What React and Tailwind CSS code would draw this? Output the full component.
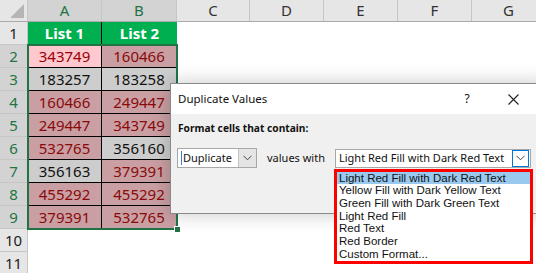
import React from 'react'

const cols = ['A', 'B', 'C', 'D', 'E', 'F', 'G']
const colW = ['w-[74px]', 'w-[75px]', 'w-[73px]', 'w-[74px]', 'w-[74px]', 'w-[74px]', 'w-[74px]']

// p = pink (duplicate), g = grey (unique), a = active cell
const data = [
  [['343749', 'a'], ['160466', 'p']],
  [['183257', 'g'], ['183258', 'g']],
  [['160466', 'p'], ['249447', 'p']],
  [['249447', 'p'], ['343749', 'p']],
  [['532765', 'p'], ['356160', 'g']],
  [['356163', 'g'], ['379391', 'p']],
  [['455292', 'p'], ['455292', 'p']],
  [['379391', 'p'], ['532765', 'p']],
]

const cellTone = {
  a: 'bg-[#ffc7ce] text-[#9c0006]',
  p: 'bg-[#c99fa3] text-[#8a0a0a]',
  g: 'bg-[#cdcdcd] text-[#111]',
}

const options = [
  'Light Red Fill with Dark Red Text',
  'Yellow Fill with Dark Yellow Text',
  'Green Fill with Dark Green Text',
  'Light Red Fill',
  'Red Text',
  'Red Border',
  'Custom Format...',
]

function Chevron() {
  return (
    <svg width="9" height="6" viewBox="0 0 9 6">
      <path d="M0.5 0.8 L4.5 4.8 L8.5 0.8" fill="none" stroke="#444" strokeWidth="1" />
    </svg>
  )
}

function RowHead({ n, selected }) {
  return (
    <div
      className={`w-[28px] h-[23px] shrink-0 flex items-center justify-center border-b border-r border-[#c6c6c6] text-[15px] ${
        selected ? 'bg-[#d3d3d3] text-[#217346]' : 'bg-[#e6e6e6] text-[#222]'
      }`}
    >
      {n}
    </div>
  )
}

export default function App() {
  return (
    <div className="relative w-[536px] h-[273px] overflow-hidden bg-white font-['Noto_Sans',sans-serif]">
      {/* Column headers */}
      <div className="flex h-[22px] border-b border-[#ababab] bg-[#e6e6e6]">
        <div className="w-[28px] shrink-0 border-r border-[#c6c6c6] flex items-end justify-end p-[3px]">
          <svg width="14" height="14" viewBox="0 0 14 14">
            <path d="M14 0 L14 14 L0 14 Z" fill="#b5b5b5" />
          </svg>
        </div>
        {cols.map((c, i) => (
          <div
            key={c}
            className={`${colW[i]} shrink-0 flex items-center justify-center border-r border-[#c6c6c6] text-[15px] ${
              i < 2 ? 'bg-[#d3d3d3] text-[#217346]' : 'text-[#333]'
            }`}
          >
            {c}
          </div>
        ))}
      </div>

      {/* Row 1 */}
      <div className="flex">
        <RowHead n={1} />
        <div className="w-[74px] h-[23px] shrink-0 bg-[#00b050] text-white font-bold text-[15px] flex items-center justify-center border-r border-b border-black">
          List 1
        </div>
        <div className="w-[75px] h-[23px] shrink-0 bg-[#00b050] text-white font-bold text-[15px] flex items-center justify-center border-b border-black">
          List 2
        </div>
      </div>

      {/* Data rows */}
      {data.map((row, r) => (
        <div key={r} className="flex">
          <RowHead n={r + 2} selected />
          {row.map(([v, t], c) => (
            <div
              key={c}
              className={`${c === 0 ? 'w-[74px]' : 'w-[75px]'} h-[23px] shrink-0 border-r border-b border-black flex items-center justify-center text-[15px] ${cellTone[t]}`}
            >
              {v}
            </div>
          ))}
        </div>
      ))}

      <div className="flex">
        <RowHead n={10} />
      </div>
      <div className="flex">
        <RowHead n={11} />
      </div>

      {/* Selection outline + fill handle */}
      <div className="absolute left-[27px] top-[44px] w-[151px] h-[186px] border-2 border-[#217346] pointer-events-none" />
      <div className="absolute left-[174px] top-[226px] w-[7px] h-[7px] bg-[#217346] border border-white" />

      {/* Dialog */}
      <div className="absolute left-[170px] top-[83px] w-[380px] h-[131px] border border-[#8a8a8a] shadow-[0_0_18px_rgba(0,0,0,0.22)] bg-[#f0f0f0] text-[11px] leading-[14px] text-[#111]">
        <div className="h-[30px] bg-white flex items-center pl-[7px]">
          <span className="flex-1 text-[11.5px]">Duplicate Values</span>
          <span className="w-[20px] text-center mr-[26px] text-[12px]">?</span>
          <span className="w-[20px] flex justify-center mr-[26px]">
            <svg width="11" height="11" viewBox="0 0 11 11">
              <path d="M0.5 0.5 L10.5 10.5 M10.5 0.5 L0.5 10.5" stroke="#222" strokeWidth="1.1" />
            </svg>
          </span>
        </div>
        <div className="px-[7px] pt-[7px]">
          <div className="font-bold text-[10.2px]">Format cells that contain:</div>
          <div className="flex items-center mt-[13px]">
            <div className="w-[80px] h-[20px] ml-[-1px] flex items-center bg-white border border-[#a8a8a8]">
              <span className="w-px h-[14px] bg-[#3a7bd5] ml-[3px]" />
              <span className="flex-1 pl-[1px] whitespace-nowrap">Duplicate</span>
              <span className="w-[18px] h-[18px] bg-[#e5e5e5] border-l border-[#c2c2c2] flex items-center justify-center">
                <Chevron />
              </span>
            </div>
            <span className="ml-[10px] w-[68px] whitespace-nowrap">values with</span>
            <div className="relative w-[196px] h-[19px] bg-white border border-[#a8a8a8] flex items-center">
              <span className="flex-1 pl-[3px] whitespace-nowrap">Light Red Fill with Dark Red Text</span>
              <span className="w-[17px] h-[17px] border border-[#0078d7] flex items-center justify-center mr-[1px]">
                <Chevron />
              </span>
              {/* Dropdown list */}
              <div className="absolute left-[-2px] top-[19px] w-[199px] h-[95px] border-[3px] border-[#ff0000] bg-white font-['Liberation_Sans',sans-serif] text-[11.5px] leading-[12.7px]">
                {options.map((o, i) => (
                  <div key={o} className={`pl-[2px] h-[12.7px] whitespace-nowrap ${i === 0 ? 'bg-[#99c9ef]' : ''}`}>
                    {o}
                  </div>
                ))}
              </div>
            </div>
          </div>
        </div>
      </div>
    </div>
  )
}
